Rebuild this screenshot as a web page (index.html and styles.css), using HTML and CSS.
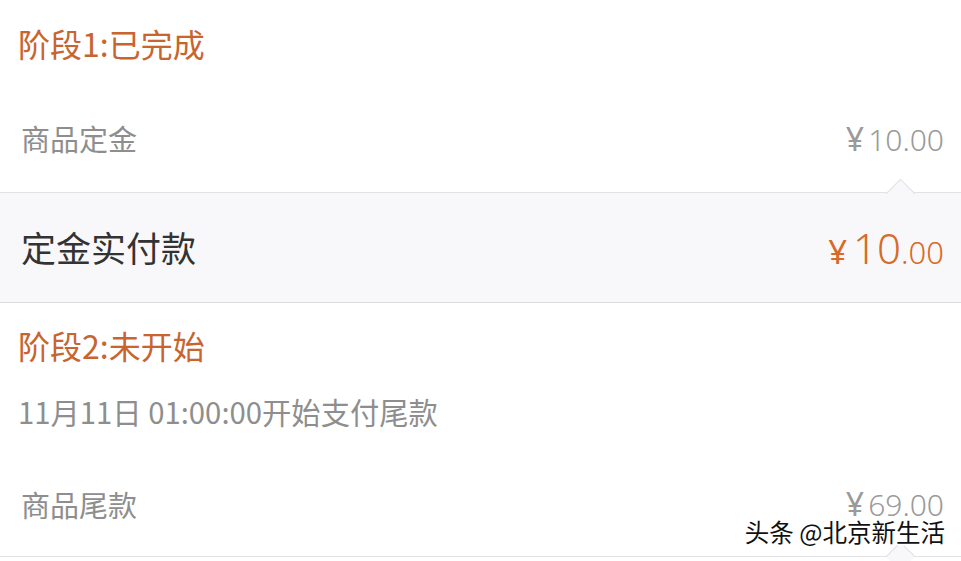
FILE: index.html
```html
<!DOCTYPE html>
<html lang="zh-CN">
<head>
    <meta charset="UTF-8">
    <title>定金尾款</title>
    <link rel="stylesheet" href="styles.css">
</head>
<body>
    <div class="order">
        <div class="stage">
            <div class="stage-title">阶段1:已完成</div>
            <div class="row">
                <span class="label">商品定金</span>
                <span class="price"><span class="yen">¥</span>10.00</span>
            </div>
        </div>
        <div class="paid">
            <span class="caret"></span>
            <span class="paid-label">定金实付款</span>
            <span class="paid-price"><span class="yen">¥</span><span class="big">10</span>.00</span>
        </div>
        <div class="stage stage-two">
            <div class="stage-title">阶段2:未开始</div>
            <div class="note">11月11日 01:00:00开始支付尾款</div>
            <div class="row row-last">
                <span class="label">商品尾款</span>
                <span class="price"><span class="yen">¥</span>69.00</span>
            </div>
            <span class="caret caret-bottom"></span>
        </div>
        <div class="watermark">头条 @北京新生活</div>
    </div>
</body>
</html>
```

FILE: styles.css
```css
body {
    margin: 0;
    font-family: "Noto Sans CJK SC", "Noto Sans", sans-serif;
    background: #fff;
}

.order {
    position: relative;
    width: 961px;
    height: 561px;
    overflow: hidden;
}

.stage {
    background: #fff;
    border-bottom: 1px solid #e2e2e4;
}

.stage-title {
    height: 90px;
    display: flex;
    align-items: center;
    padding-left: 18px;
    padding-bottom: 4px;
    box-sizing: border-box;
    font-size: 32px;
    color: #c8642e;
}

.row {
    height: 102px;
    display: flex;
    align-items: center;
    justify-content: space-between;
    padding: 0 17px 6px 21px;
    box-sizing: border-box;
}

.label {
    font-size: 29px;
    color: #8e8e8e;
}

.price {
    font-size: 30px;
    color: #9a9a9a;
    font-family: "Noto Sans", sans-serif;
    font-weight: 300;
}

.price .yen {
    font-size: 32px;
    margin-right: 4px;
    font-weight: 400;
}

.paid {
    position: relative;
    height: 110px;
    display: flex;
    align-items: center;
    justify-content: space-between;
    padding: 0 17px 3px 21px;
    box-sizing: border-box;
    background: #f8f8fa;
    border-bottom: 1px solid #dcdcde;
}

.paid-label {
    font-size: 35px;
    color: #333;
}

.paid-price {
    color: #d86a28;
    font-family: "Noto Sans", sans-serif;
    font-weight: 300;
    font-size: 31px;
    padding-top: 2px;
}

.paid-price .yen {
    font-size: 33px;
    margin-right: 6px;
    font-weight: 400;
}

.big {
    font-size: 42px;
}

.caret {
    position: absolute;
    top: -10px;
    left: 890px;
    width: 20px;
    height: 20px;
    background: #f8f8fa;
    border-left: 1px solid #e0e0e2;
    border-top: 1px solid #e0e0e2;
    transform: rotate(45deg);
}

.stage-two {
    position: relative;
    height: 253px;
}

.stage-two .stage-title {
    height: 88px;
}

.note {
    height: 44px;
    padding-left: 18px;
    font-size: 29.3px;
    color: #8e8e8e;
    line-height: 40px;
}

.row-last {
    height: 121px;
    padding-top: 24px;
    padding-bottom: 8px;
}

.caret-bottom {
    top: auto;
    bottom: -11px;
}

.watermark {
    position: absolute;
    right: 16px;
    bottom: 12px;
    font-size: 24.5px;
    color: #111;
    text-shadow: 1px 1px 0 #fff, -1px -1px 0 #fff, 1px -1px 0 #fff, -1px 1px 0 #fff, 2px 0 0 #fff, -2px 0 0 #fff, 0 2px 0 #fff, 0 -2px 0 #fff;
}
```
